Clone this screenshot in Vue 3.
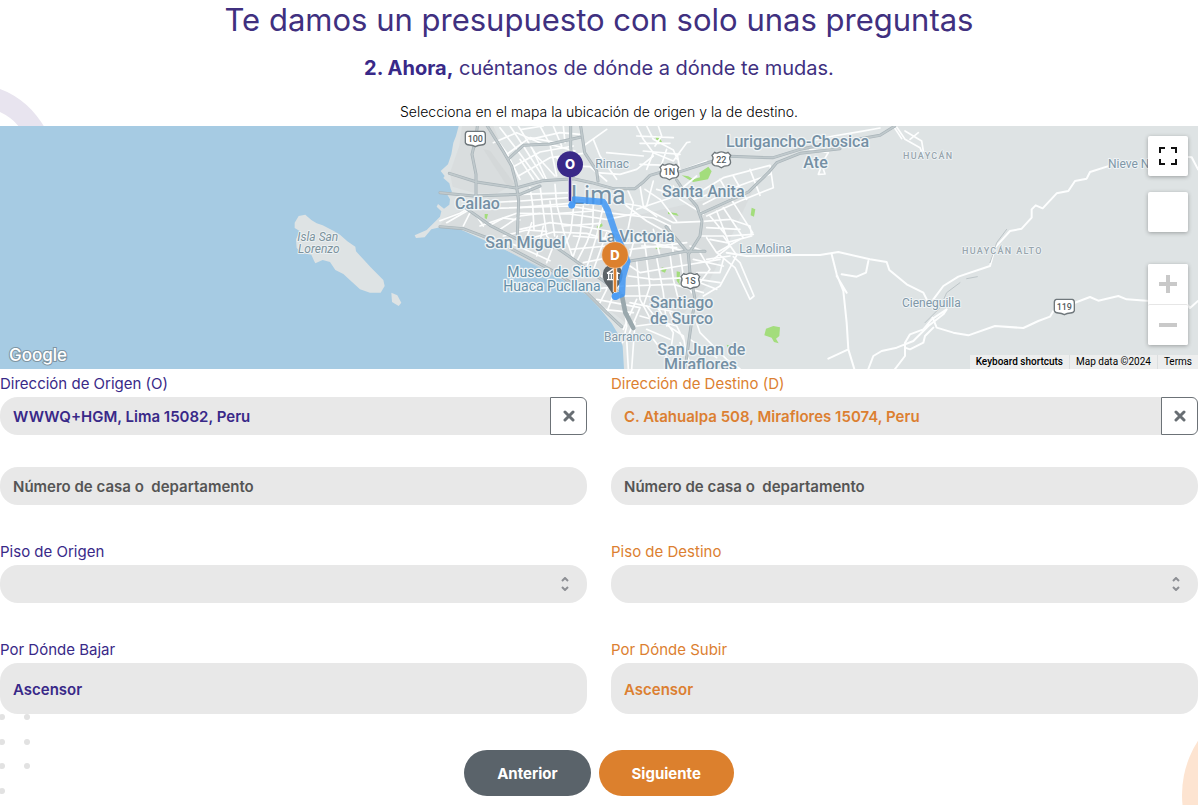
<script setup>
import { reactive } from 'vue'

const sides = reactive([
  { id: 'origen', tone: 'purple', addressLabel: 'Dirección de Origen (O)', address: 'WWWQ+HGM, Lima 15082, Peru', unit: '', floorLabel: 'Piso de Origen', accessLabel: 'Por Dónde Bajar' },
  { id: 'destino', tone: 'orange', addressLabel: 'Dirección de Destino (D)', address: 'C. Atahualpa 508, Miraflores 15074, Peru', unit: '', floorLabel: 'Piso de Destino', accessLabel: 'Por Dónde Subir' }
])

const highways = [
  'M112 0L108 35L96 85L108 145V212',
  'M142 0L186 70L215 120L228 170L236 225L232 325',
  'M206 98L250 58L330 54L420 34',
  'M392 0V62L400 150M422 0L434 80L470 135L474 165',
  'M28 142L110 168L228 186L310 164L400 158L455 170L520 188L585 188L610 168L630 148L668 137L720 137L810 108L870 91L950 94L1000 95L1080 70L1160 54L1240 42L1320 28L1365 0',
  'M80 248L150 298L232 340L290 355L350 365L400 400L450 436L540 500',
  'M0 302L70 308L180 350L330 430L440 500L500 560L545 602',
  'M710 162L735 200L770 240L786 285L780 330L745 385L750 440L765 520L750 620L735 729',
  'M780 264L925 198L985 140L1010 110L1080 82L1200 68',
  'M565 406L640 394L735 376L795 376',
  'M678 302L710 340L742 378',
  'M0 200L100 210L240 205L300 180'
]

const streets = [
  'M0 284L60 262L110 232L240 225L400 214L490 222L600 240L700 290L790 286',
  'M20 290L90 250L160 247L390 240L520 262L640 276L690 300',
  'M120 300L230 262L390 264L500 280L590 262',
  'M240 310L330 290L420 300L520 318L640 350L735 376',
  'M260 340L340 318L440 322L540 352L660 346',
  'M150 298L190 276L240 282M110 270L130 300M95 250L70 300',
  'M232 245L390 232M245 205L395 200L395 240',
  'M300 180L306 225L320 330L350 362M270 185L278 235L282 310',
  'M345 175L350 235L372 320L400 398M330 225L344 330',
  'M400 250L392 320L368 372M430 240L420 330L400 390M460 235L458 300L440 350L410 408',
  'M490 240L470 330L440 425M500 320L460 432M540 352L480 460',
  'M360 262L460 255M370 300L480 292M400 330L530 340M390 370L500 360M430 410L530 390',
  'M180 310L240 270L300 262M190 330L260 312L320 316M200 348L238 362L330 404',
  'M250 365L275 290M290 390L310 300M320 410L352 330',
  'M150 15L200 80L240 160M180 5L230 70L300 165M210 0L250 60L310 155M235 0L290 90L345 150',
  'M160 50L230 20L310 55M200 85L270 35L350 50M215 125L300 78L400 60M235 150L330 95L430 82',
  'M240 100L280 160M280 75L318 158M330 55L350 150M300 0L330 55L405 75M340 0L365 60M370 0L375 50',
  'M245 10L310 0M270 40L360 20L420 25M430 60L500 10M350 95L395 120L450 122L500 165',
  'M460 40L480 90L530 160M470 140L540 145L590 130L640 90M500 80L610 90',
  'M590 0L610 40L640 80L700 105L740 50L750 48M620 0L640 40L700 72L712 100M655 0L665 30L645 60M590 30L700 35',
  'M600 52L690 52M610 75L720 85M640 80L620 130M680 70L660 130M712 85L720 135L800 105M600 115L690 118',
  'M520 190L560 240L620 285L700 330M560 185L580 230L560 330M600 180L610 240L650 272M640 165L620 240',
  'M590 250L690 216L770 150M615 190L660 220L710 286M650 190L760 220L860 188M700 180L720 220L790 264',
  'M760 210L850 155L990 118L1000 185L900 225L800 270M790 235L895 180L990 145M840 160L880 230M880 150L920 220M930 130L960 208',
  'M790 286L870 280L930 300L935 330L860 350L810 340M800 305L900 310M830 255L870 360L820 400M850 245L910 335M880 230L938 320M810 270L860 330L940 325',
  'M800 335L830 380L900 340M780 330L850 330L890 388L840 480L790 510M830 380L885 425L930 520L942 510L900 410L880 392',
  'M570 420L600 440L720 420L840 400M565 450L640 460L740 455L840 470M560 480L700 475L790 500M550 510L620 510L720 530M570 530L690 555L750 570',
  'M590 405L600 520L640 595M620 400L630 480L610 540M650 395L670 500L680 600M690 385L700 460L720 540M720 382L730 450L755 500',
  'M580 350L570 390M610 320L620 395M640 310L660 390M690 300L700 382M570 370L740 350M560 335L690 325M605 360L710 365M750 360L790 376',
  'M780 380L810 430L780 470L830 490M800 400L870 390M760 400L850 420M770 440L840 440L850 400',
  'M450 490L550 480M470 520L600 545M490 550L580 560M500 490L480 530M530 480L500 560M590 520L550 610M600 545L560 640L565 729',
  'M550 520L560 600L548 650M585 590L575 729M590 600L670 590L730 630L740 690M600 570L710 600M620 540L660 590M650 540L700 620L690 690M690 560L730 640M620 610L690 640',
  'M750 530L780 620L860 700L900 729M750 640L830 695M720 650L760 729M640 640L700 720',
  'M1080 52L1180 30L1260 17L1320 6M1110 70L1165 80L1150 105L1135 145L1155 144L1140 100',
  'M1368 0L1395 40L1440 65L1450 90M1395 15L1445 45L1450 75M1410 40L1435 20M1360 0L1385 38'
]

const valleys = [
  'M860 380L920 390L1070 387L1140 387L1195 378L1290 400L1340 408L1348 432L1400 475L1450 500L1465 530',
  'M1175 385L1190 445L1210 495L1220 590L1225 670L1243 729M1205 445L1250 452L1278 440L1285 405M1190 450L1220 500M1165 698L1225 670',
  'M1285 729L1300 690L1325 675L1370 665L1420 645L1465 600L1510 565L1520 550L1475 580L1450 610L1410 625L1395 650L1395 690L1365 729',
  'M1480 520L1510 480L1555 452L1650 420L1665 365L1710 315L1745 308L1775 275V250L1787 238L1808 247L1850 202L1885 195L1905 165L1940 158L1950 138L2010 119',
  'M1478 575L1490 605L1540 620L1585 628L1665 600L1750 606L1795 585L1830 572L1840 555L1950 513L1975 524L2035 510L2060 520L2130 525L2235 528L2250 546L2274 525',
  'M1395 665L1410 670L1450 650L1455 630L1480 605M2235 92L2255 94L2274 130'
]

const parks = [
  'M645 30L656 30L666 48L654 54Z', 'M725 148L745 151L760 160L780 154L778 140L805 122L815 136L804 160L760 168L745 160Z',
  'M684 258L710 262L716 270L702 266L684 264Z', 'M134 264H144L140 280L134 276Z', 'M935 245L946 250L942 272L932 268Z',
  'M486 292L488 300L472 310L470 302Z', 'M710 436L720 438L718 470L722 480L710 464Z', 'M665 424L680 428L675 440L664 436Z',
  'M978 608L1000 600L1020 604L1018 630L1008 638L1016 652L1002 648L995 635L973 628Z', 'M645 362L664 358V366L648 370Z', 'M860 656L874 660L864 668Z'
]

const labels = [
  { x: 45, y: 248, s: 48, t: 'Callao', k: 'city' }, { x: 136, y: 365, s: 48, t: 'San Miguel', k: 'city' },
  { x: 666, y: 212, s: 48, t: 'Santa Anita', k: 'city' }, { x: 858, y: 62, s: 48, t: 'Lurigancho-Chosica', k: 'city' },
  { x: 1090, y: 125, s: 48, t: 'Ate', k: 'city' }, { x: 474, y: 347, s: 48, t: 'La Victoria', k: 'city' },
  { x: 630, y: 545, s: 48, t: 'Santiago', k: 'city' }, { x: 630, y: 593, s: 48, t: 'de Surco', k: 'city' },
  { x: 652, y: 686, s: 48, t: 'San Juan de', k: 'city' }, { x: 672, y: 733, s: 48, t: 'Miraflores', k: 'city' },
  { x: 202, y: 453, s: 42, t: 'Museo de Sitio', k: 'place' }, { x: 190, y: 495, s: 42, t: 'Huaca Pucllana', k: 'place' },
  { x: 466, y: 126, s: 36, t: 'Rimac', k: 'town' }, { x: 492, y: 645, s: 36, t: 'Barranco', k: 'town' },
  { x: 898, y: 381, s: 36, t: 'La Molina', k: 'town' }, { x: 1386, y: 544, s: 36, t: 'Cieneguilla', k: 'town' },
  { x: 2004, y: 126, s: 36, t: 'Nieve Nieve', k: 'town' },
  { x: 1389, y: 99, s: 27, t: 'HUAYCÁN', k: 'area' }, { x: 1566, y: 384, s: 27, t: 'HUAYCÁN ALTO', k: 'area' },
  { x: -428, y: 346, s: 36, t: 'Isla San', k: 'isle' }, { x: -426, y: 382, s: 36, t: 'Lorenzo', k: 'isle' }
]

const shields = [
  { x: 106, y: 38, t: '100' }, { x: 1873, y: 542, t: '119' }
]
const badges = [
  { x: 688, y: 137, t: '1N' }, { x: 844, y: 101, t: '22' }, { x: 751, y: 465, t: '1S' }
]
</script>

<template>
  <main class="page">
    <svg class="decor ring" viewBox="0 0 50 50" aria-hidden="true"><path d="M0 11C20 18 35 33 45 50H20C14 42 8 38 0 34Z" fill="#e8e4ef" /></svg>
    <svg class="decor dots" viewBox="0 0 40 95" aria-hidden="true">
      <g fill="#e2e2e2"><circle cx="2" cy="7" r="3" /><circle cx="27" cy="7" r="3" /><circle cx="2" cy="32" r="3" /><circle cx="27" cy="32" r="3" /><circle cx="2" cy="56" r="3" /><circle cx="27" cy="56" r="3" /><circle cx="2" cy="81" r="3" /></g>
    </svg>
    <svg class="decor peach" viewBox="0 0 20 70" aria-hidden="true"><circle cx="104" cy="60" r="100" fill="#fde4d1" /></svg>

    <header class="intro">
      <h1>Te damos un presupuesto con solo unas preguntas</h1>
      <h2><strong>2. Ahora,</strong> cuéntanos de dónde a dónde te mudas.</h2>
      <p>Selecciona en el mapa la ubicación de origen y la de destino.</p>
    </header>

    <section class="map" aria-label="Mapa">
      <svg class="canvas" viewBox="-1320 0 3594 729" preserveAspectRatio="xMidYMid slice">
        <rect x="-3000" y="-600" width="7000" height="2000" fill="#a6cbe3" />
        <path fill="#dee3e4" d="M56 -300V0L48 30L40 50L34 85L24 115L2 135L14 150L10 156L28 172L32 188L36 198L22 206L30 220L28 236L12 248L-6 234L-10 242L4 256L0 272L-40 312L-76 328L-72 336L-46 334L-26 310L0 304L60 310L100 328L180 364L250 398L330 436L440 506L480 548L515 592L532 620L548 660L552 729V1400H4000V-300Z" />
        <path fill="#d5d9db" d="M66 0L58 60L30 140L38 182L100 200L230 205L400 212L580 270L760 230L940 190L870 340L800 480L700 600L570 600L440 500L240 395L100 320L0 298L20 272L100 240L230 170L160 0Z" opacity=".6" />
        <path fill="#cfd3d4" d="M130 70L150 74L228 180L200 178Z" opacity=".5" />
        <path fill="#dee3e4" d="M-436 290L-424 270L-404 266L-386 282L-370 292L-352 298L-320 314L-300 326L-278 346L-254 362L-252 376L-230 400L-208 424L-170 462L-166 480L-178 500L-210 500L-240 490L-268 464L-290 444L-314 432L-330 408L-352 402L-374 412L-378 404L-386 386L-416 380L-430 366L-432 340L-420 316L-436 306Z" />
        <path fill="#dee3e4" d="M-146 500L-128 508L-116 530L-124 540L-144 528Z" />
        <path v-for="(d, i) in parks" :key="'p' + i" :d="d" fill="#a3dd7c" />
        <g fill="none" stroke-linejoin="round" stroke-linecap="round">
          <path v-for="(d, i) in streets" :key="'s' + i" :d="d" stroke="#fdfefe" stroke-width="5" />
          <path v-for="(d, i) in valleys" :key="'v' + i" :d="d" stroke="#fdfefe" stroke-width="6" />
          <path v-for="(d, i) in highways" :key="'h' + i" :d="d" stroke="#a9b4b9" stroke-width="9" />
          <path v-for="(d, i) in highways" :key="'i' + i" :d="d" stroke="#c0c9cc" stroke-width="5" />
          <path d="M546 510L556 560L580 606" stroke="#9aa8ad" stroke-width="14" />
          <path d="M1700 310L1670 350L1650 410M1612 452L1580 458M1560 470L1520 500L1500 545L1455 590" stroke="#bdc5c8" stroke-width="3" />
        </g>
        <text v-for="l in labels" :key="l.t + l.y" :x="l.x" :y="l.y" :font-size="l.s" :class="['label', l.k]">{{ l.t }}</text>
        <text x="392" y="235" font-size="75" class="label capital">Lima</text>
        <g v-for="b in shields" :key="b.t" class="shield">
          <path :transform="`translate(${b.x} ${b.y})`" d="M-24 -22H24Q31 -20 30 -10V12Q28 18 18 19Q8 20 0 24Q-8 20 -18 19Q-28 18 -30 12V-10Q-31 -20 -24 -22Z" />
          <text :x="b.x" :y="b.y + 10">{{ b.t }}</text>
        </g>
        <g v-for="b in badges" :key="b.t" class="shield">
          <path :transform="`translate(${b.x} ${b.y})`" d="M-20 -22Q-14 -18 -9 -21Q0 -26 9 -21Q14 -18 20 -22L28 -13Q22 -6 27 3Q30 14 20 18Q8 18 0 24Q-8 18 -20 18Q-30 14 -27 3Q-22 -6 -28 -13Z" />
          <text :x="b.x" :y="b.y + 10">{{ b.t }}</text>
        </g>
        <path d="M518 505L502 480Q488 465 488 445A30 30 0 0 1 548 445Q548 465 534 480Z" fill="#5d6468" />
        <path d="M501 442L518 430L535 442H501M506 444V459M514 444V459M524 444V459M532 444V459M501 461H536" fill="none" stroke="#fff" stroke-width="4" />
        <path d="M396 236L402 220L490 228L503 252L524 315L544 360L562 406L548 455L546 504L526 512" fill="none" stroke="#3f97f5" stroke-opacity=".85" stroke-width="19" stroke-linejoin="round" stroke-linecap="round" />
        <circle cx="395" cy="238" r="10" fill="#4b9cf5" /><circle cx="526" cy="511" r="11" fill="#4b9cf5" />
        <path d="M390 145V225" stroke="#fff" stroke-width="12" /><path d="M390 140V225" stroke="#392988" stroke-width="8" />
        <circle cx="390" cy="115" r="39" fill="#392988" />
        <path d="M525 420V498" stroke="#fff" stroke-width="13" /><path d="M525 415V498" stroke="#dc802d" stroke-width="8" />
        <circle cx="525" cy="387" r="40" fill="#dc802d" stroke="#fff" stroke-opacity=".6" stroke-width="2" />
        <text x="390" y="129" class="pin">O</text><text x="525" y="401" class="pin">D</text>
      </svg>

      <span class="google">Google</span>
      <div class="controls">
        <button type="button" aria-label="Pantalla completa"><svg viewBox="0 0 18 18" width="18" height="18"><path d="M1 6V1H6M12 1H17V6M17 12V17H12M6 17H1V12" fill="none" stroke="#111" stroke-width="2" /></svg></button>
        <button type="button" class="blank" aria-label="Street View"></button>
        <div class="zoom">
          <button type="button" aria-label="Acercar"><svg viewBox="0 0 18 18" width="18" height="18"><path d="M9 0V18M0 9H18" stroke="#c9c9c9" stroke-width="4" /></svg></button>
          <button type="button" aria-label="Alejar"><svg viewBox="0 0 18 18" width="18" height="18"><path d="M0 9H18" stroke="#c9c9c9" stroke-width="4" /></svg></button>
        </div>
      </div>
      <div class="credits">
        <button type="button">Keyboard shortcuts</button>
        <span>Map data ©2024</span>
        <a href="#">Terms</a>
      </div>
    </section>

    <form @submit.prevent>
      <div class="columns">
        <div v-for="s in sides" :key="s.id" :class="['column', s.tone]">
          <div class="field">
            <label :for="s.id + '-address'">{{ s.addressLabel }}</label>
            <div class="group">
              <input :id="s.id + '-address'" v-model="s.address" type="text" />
              <button type="button" aria-label="Borrar dirección" @click="s.address = ''">
                <svg viewBox="0 0 12 12" width="12" height="12"><path d="M2 2L10 10M10 2L2 10" stroke="#686e73" stroke-width="3" stroke-linecap="round" /></svg>
              </button>
            </div>
          </div>
          <div class="field">
            <input v-model="s.unit" type="text" aria-label="Número de casa o departamento" placeholder="Número de casa o  departamento" />
          </div>
          <div class="field">
            <label :for="s.id + '-floor'">{{ s.floorLabel }}</label>
            <div class="picker">
              <select :id="s.id + '-floor'"><option value=""></option><option>1</option><option>2</option><option>3</option></select>
              <svg viewBox="0 0 8 14" width="8" height="14" aria-hidden="true"><path d="M1 4L4 1L7 4M1 10L4 13L7 10" fill="none" stroke="#8d8f94" stroke-width="2" /></svg>
            </div>
          </div>
          <div class="field">
            <label :for="s.id + '-access'">{{ s.accessLabel }}</label>
            <select :id="s.id + '-access'" class="tall"><option>Ascensor</option><option>Escalera</option></select>
          </div>
        </div>
      </div>
      <div class="actions">
        <button type="button" class="prev">Anterior</button>
        <button type="submit" class="next">Siguiente</button>
      </div>
    </form>
  </main>
</template>

<style>
body { margin: 0; background: #fff; overflow-x: hidden; }
</style>

<style scoped>
* { box-sizing: border-box; }
.page { position: relative; min-height: 100vh; overflow: hidden; font-family: Inter, 'Liberation Sans', sans-serif; font-size: 15px; color: #111; }
.decor { position: absolute; }
.ring { left: 0; top: 78px; width: 50px; height: 50px; }
.dots { left: 0; top: 710px; width: 40px; height: 95px; }
.peach { right: 0; top: 735px; width: 20px; height: 70px; }
.intro { position: relative; height: 126px; text-align: center; }
.intro h1, .intro h2, .intro p { margin: 0; }
.intro h1 { font-size: 31px; font-weight: 400; line-height: 40px; color: #40307f; }
.intro h2 { margin-top: 12px; font-size: 20px; font-weight: 400; line-height: 32px; color: #40307f; }
.intro h2 strong { font-weight: 700; color: #392988; }
.intro p { margin-top: 16px; font-size: 14px; font-weight: 300; line-height: 24px; color: #000; }
.map { position: relative; height: 243px; overflow: hidden; font-family: Roboto, sans-serif; }
.canvas { display: block; width: 100%; height: 100%; }
.label { stroke: #eff4f6; stroke-width: 8px; stroke-linejoin: round; paint-order: stroke; fill: #7590a4; }
.city { font-weight: 500; }
.capital { font-weight: 400; }
.place { fill: #638fa8; }
.town { fill: #8097a7; stroke-width: 6px; }
.area { fill: #98a5ad; stroke-width: 5px; letter-spacing: 4px; font-weight: 500; }
.isle { fill: #7c929c; stroke-width: 5px; font-style: italic; }
.shield path { fill: #fff; stroke: #6f777b; stroke-width: 4px; }
.shield text { font-size: 27px; font-weight: 500; fill: #555c60; text-anchor: middle; }
.pin { font: 800 39px Inter, sans-serif; fill: #fff; text-anchor: middle; }
.google { position: absolute; left: 9px; bottom: 2px; font: 500 17px/24px Inter, sans-serif; color: #fff; -webkit-text-stroke: 2px #7f95a2; paint-order: stroke; }
.controls { position: absolute; top: 10px; right: 10px; display: flex; flex-direction: column; gap: 16px; }
.controls button { display: flex; align-items: center; justify-content: center; width: 40px; height: 40px; padding: 0; border: 0; border-radius: 2px; background: #fff; box-shadow: 0 1px 4px rgba(0, 0, 0, .3); }
.controls .zoom { margin-top: 16px; background: #fff; border-radius: 2px; box-shadow: 0 1px 4px rgba(0, 0, 0, .3); }
.controls .zoom button { box-shadow: none; }
.controls .zoom button + button { height: 41px; border-top: 1px solid #e6e6e6; }
.credits { position: absolute; right: 0; bottom: 0; display: flex; height: 14px; font-size: 10px; line-height: 14px; color: #000; background: rgba(240, 240, 240, .85); }
.credits > * { padding: 0 6px; border: 0; background: none; color: inherit; font: inherit; text-decoration: none; }
.credits > * + * { border-left: 1px solid #dcdfe0; }
.credits button { font-weight: 500; }
.columns { display: grid; grid-template-columns: 1fr 1fr; gap: 24px; }
.column { display: flex; flex-direction: column; gap: 32px; }
.purple { --tone: #392988; }
.orange { --tone: #dc7f31; }
.field { display: flex; flex-direction: column; color: var(--tone); }
label { padding-top: 2px; font-size: 15px; line-height: 26px; }
input, select { width: 100%; min-width: 0; height: 38px; margin: 0; padding: 0 13px; border: 0; border-radius: 18px; background: #e8e8e8; color: var(--tone); font: 600 15px/24px Inter, 'Liberation Sans', sans-serif; outline: 0; appearance: none; }
input::placeholder { color: #555; opacity: 1; }
.group { display: flex; }
.group input { flex: 1; border-radius: 18px 0 0 18px; }
.group button { display: flex; align-items: center; justify-content: center; width: 37px; height: 38px; padding: 0; border: 1px solid #6c7277; border-radius: 0 6px 6px 0; background: #fff; }
.picker { position: relative; display: flex; }
.picker svg { position: absolute; right: 18px; top: 12px; pointer-events: none; }
select.tall { height: 51px; padding-top: 2px; }
.actions { display: flex; justify-content: center; gap: 8px; margin-top: 36px; }
.actions button { height: 46px; padding: 2px 33px 0; border: 0; border-radius: 23px; color: #fff; font: 700 15px/24px Inter, 'Liberation Sans', sans-serif; }
.prev { background: #5a636a; }
.next { background: #dc802d; }
</style>
